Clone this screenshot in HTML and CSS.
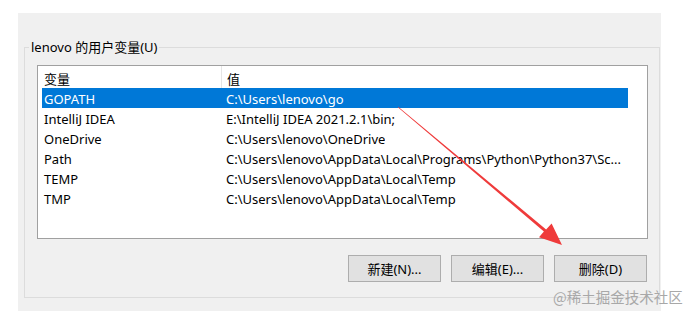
FILE: index.html
```html
<!DOCTYPE html>
<html lang="zh-CN">
<head>
  <meta charset="UTF-8" />
  <title>用户变量</title>
  <link rel="stylesheet" href="styles.css">
</head>
<body>
  <div class="panel">
    <fieldset class="group">
      <legend>lenovo 的用户变量(U)</legend>

      <div class="list">
        <div class="row head">
          <div class="cell name">变量</div>
          <div class="cell value">值</div>
        </div>
        <div class="row selected">
          <div class="cell name">GOPATH</div>
          <div class="cell value">C:\Users\lenovo\go</div>
        </div>
        <div class="row">
          <div class="cell name">IntelliJ IDEA</div>
          <div class="cell value">E:\IntelliJ IDEA 2021.2.1\bin;</div>
        </div>
        <div class="row">
          <div class="cell name">OneDrive</div>
          <div class="cell value">C:\Users\lenovo\OneDrive</div>
        </div>
        <div class="row">
          <div class="cell name">Path</div>
          <div class="cell value">C:\Users\lenovo\AppData\Local\Programs\Python\Python37\Sc...</div>
        </div>
        <div class="row">
          <div class="cell name">TEMP</div>
          <div class="cell value">C:\Users\lenovo\AppData\Local\Temp</div>
        </div>
        <div class="row">
          <div class="cell name">TMP</div>
          <div class="cell value">C:\Users\lenovo\AppData\Local\Temp</div>
        </div>
      </div>

      <div class="buttons">
        <button>新建(N)...</button>
        <button>编辑(E)...</button>
        <button>删除(D)</button>
      </div>
    </fieldset>
  </div>

  <!-- red annotation arrow -->
  <svg class="arrow" width="695" height="311" viewBox="0 0 695 311">
    <polygon fill="#ef3b3b" points="397.8,107.3 543.9,231.6 539.0,237.2 562,245 551.6,223.6 546.1,229.4 398.2,106.7" />
  </svg>

  <div class="watermark">@稀土掘金技术社区</div>
</body>
</html>
```

FILE: styles.css
```css
body {
  margin: 0;
  position: relative;
  width: 695px;
  height: 311px;
  overflow: hidden;
  background: #fff;
  font-family: 'Noto Sans', 'Noto Sans CJK SC', sans-serif;
  font-size: 13px;
  color: #000;
}

.panel {
  margin: 13px 0 0 18px;
  width: 643px;
  height: 298px;
  padding-top: 25px;
  box-sizing: border-box;
  background: #f0f0f0;
}

.group {
  margin: 0 1px 0 6px;
  padding: 9px 11px 15px 12px;
  border: 1px solid #dcdcdc;
}

.group legend {
  margin-left: -8px;
  padding: 0 2px;
  line-height: 18px;
  font-size: 13px;
}

.list {
  height: 174px;
  box-sizing: border-box;
  border: 1px solid #a0a0a0;
  background: #fff;
  padding: 0 19px 0 4px;
}

.row {
  display: flex;
  height: 20px;
  line-height: 22px;
  white-space: nowrap;
}

.row.head {
  height: 22px;
  line-height: 27px;
}

.row.selected {
  background: #0078d7;
  color: #fff;
}

.cell {
  padding-left: 2px;
  overflow: hidden;
}

.name {
  width: 177px;
  flex: none;
}

.value {
  padding-left: 5px;
}

.head .value {
  border-left: 1px solid #e5e5e5;
}

.buttons {
  display: flex;
  justify-content: flex-end;
  gap: 10px;
  margin-top: 16px;
  padding-right: 1px;
}

.buttons button {
  width: 93px;
  height: 27px;
  padding: 0;
  background: #e1e1e1;
  border: 1px solid #adadad;
  font-family: inherit;
  font-size: 13px;
  color: #000;
}

.arrow {
  position: absolute;
  left: 0;
  top: 0;
  pointer-events: none;
}

.watermark {
  position: absolute;
  left: 553px;
  top: 286px;
  font-family: 'Noto Sans CJK SC', sans-serif;
  font-size: 14.5px;
  color: #a8a8a8;
  white-space: nowrap;
}
```
